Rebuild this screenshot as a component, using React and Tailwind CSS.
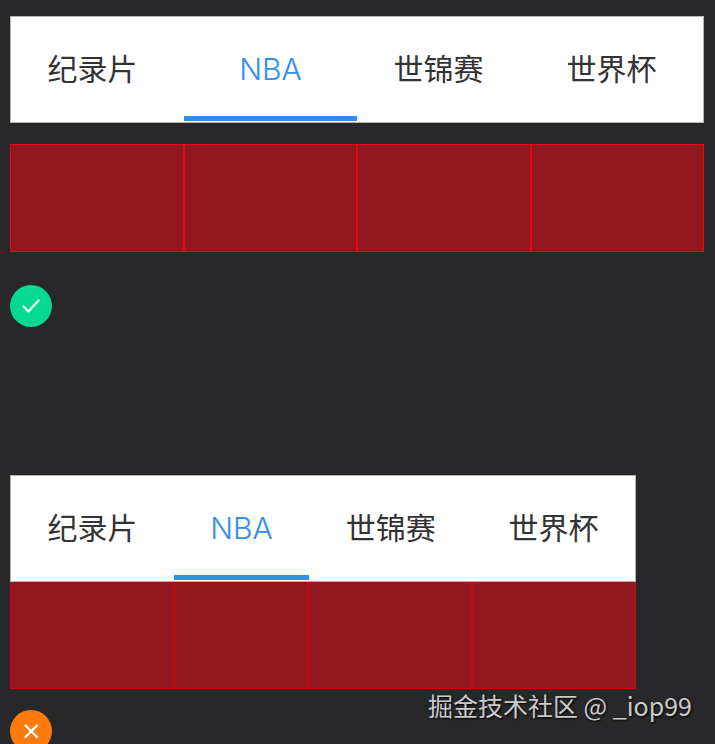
import React from "react";

const TABS = ["纪录片", "NBA", "世锦赛", "世界杯"];

function TabBar({ tabClass, activeClass, active }) {
  return (
    <nav className="flex h-[107px] border border-[#b4b4b4] bg-white">
      {TABS.map((label) => (
        <button
          key={label}
          type="button"
          className={`relative h-full whitespace-nowrap pb-[2px] text-[30px] leading-[40px] ${
            label === active
              ? `font-light text-[#2f8fea] ${activeClass}`
              : `text-[#333333] ${tabClass}`
          }`}
        >
          {label}
          {label === active && (
            <span className="absolute inset-x-0 bottom-px h-[5px] bg-[#2f8fea]" />
          )}
        </button>
      ))}
    </nav>
  );
}

// One highlighted box per tab, drawn under the bar
function TabBoxes({ className, boxClass }) {
  return (
    <div className={`grid ${className}`} aria-hidden="true">
      {TABS.map((label) => (
        <div key={label} className={`border bg-[#90181e] ${boxClass}`} />
      ))}
    </div>
  );
}

function Badge({ className, children }) {
  return (
    <div className={`flex size-[42px] items-center justify-center rounded-full ${className}`}>
      <svg
        viewBox="0 0 42 42"
        className="size-full"
        fill="none"
        stroke="currentColor"
        strokeWidth="2.4"
        strokeLinecap="round"
        strokeLinejoin="round"
        aria-hidden="true"
      >
        {children}
      </svg>
    </div>
  );
}

export default function App() {
  return (
    <main className="relative h-screen overflow-hidden bg-[#28282a] px-[10px] pt-4 font-['Inter','Noto_Sans_CJK_SC',sans-serif]">
      <section className="pr-px">
        <TabBar active="NBA" tabClass="w-1/4 pr-[10px]" activeClass="w-1/4" />
        <TabBoxes className="mt-[21px] h-[108px] grid-cols-4" boxClass="border-[#ec0510]" />
        <Badge className="mt-[33px] bg-[#04d992] text-[#e6fff6]">
          <path d="M13.5 21.5l5 5L28.5 15.5" />
        </Badge>
      </section>

      <section className="mt-[148px]">
        <div className="w-[626px] max-w-full">
          <TabBar active="NBA" tabClass="flex-auto" activeClass="flex-auto" />
          <TabBoxes
            className="h-[107px] grid-cols-[164fr_134fr_164fr_164fr]"
            boxClass="border-t-0 border-[#d2020d]"
          />
        </div>
        <Badge className="mt-[21px] bg-[#ff7a0c] text-white">
          <path d="M15.5 15.5l11.5 11.5M27 15.5L15.5 27" />
        </Badge>
      </section>

      <p className="absolute right-[23px] bottom-[21px] font-['Noto_Sans_CJK_SC',sans-serif] text-[25px] leading-[36px] whitespace-nowrap text-[#cbcbcd] [text-shadow:1px_1px_2px_#000000]">
        掘金技术社区 @ _iop99
      </p>
    </main>
  );
}
